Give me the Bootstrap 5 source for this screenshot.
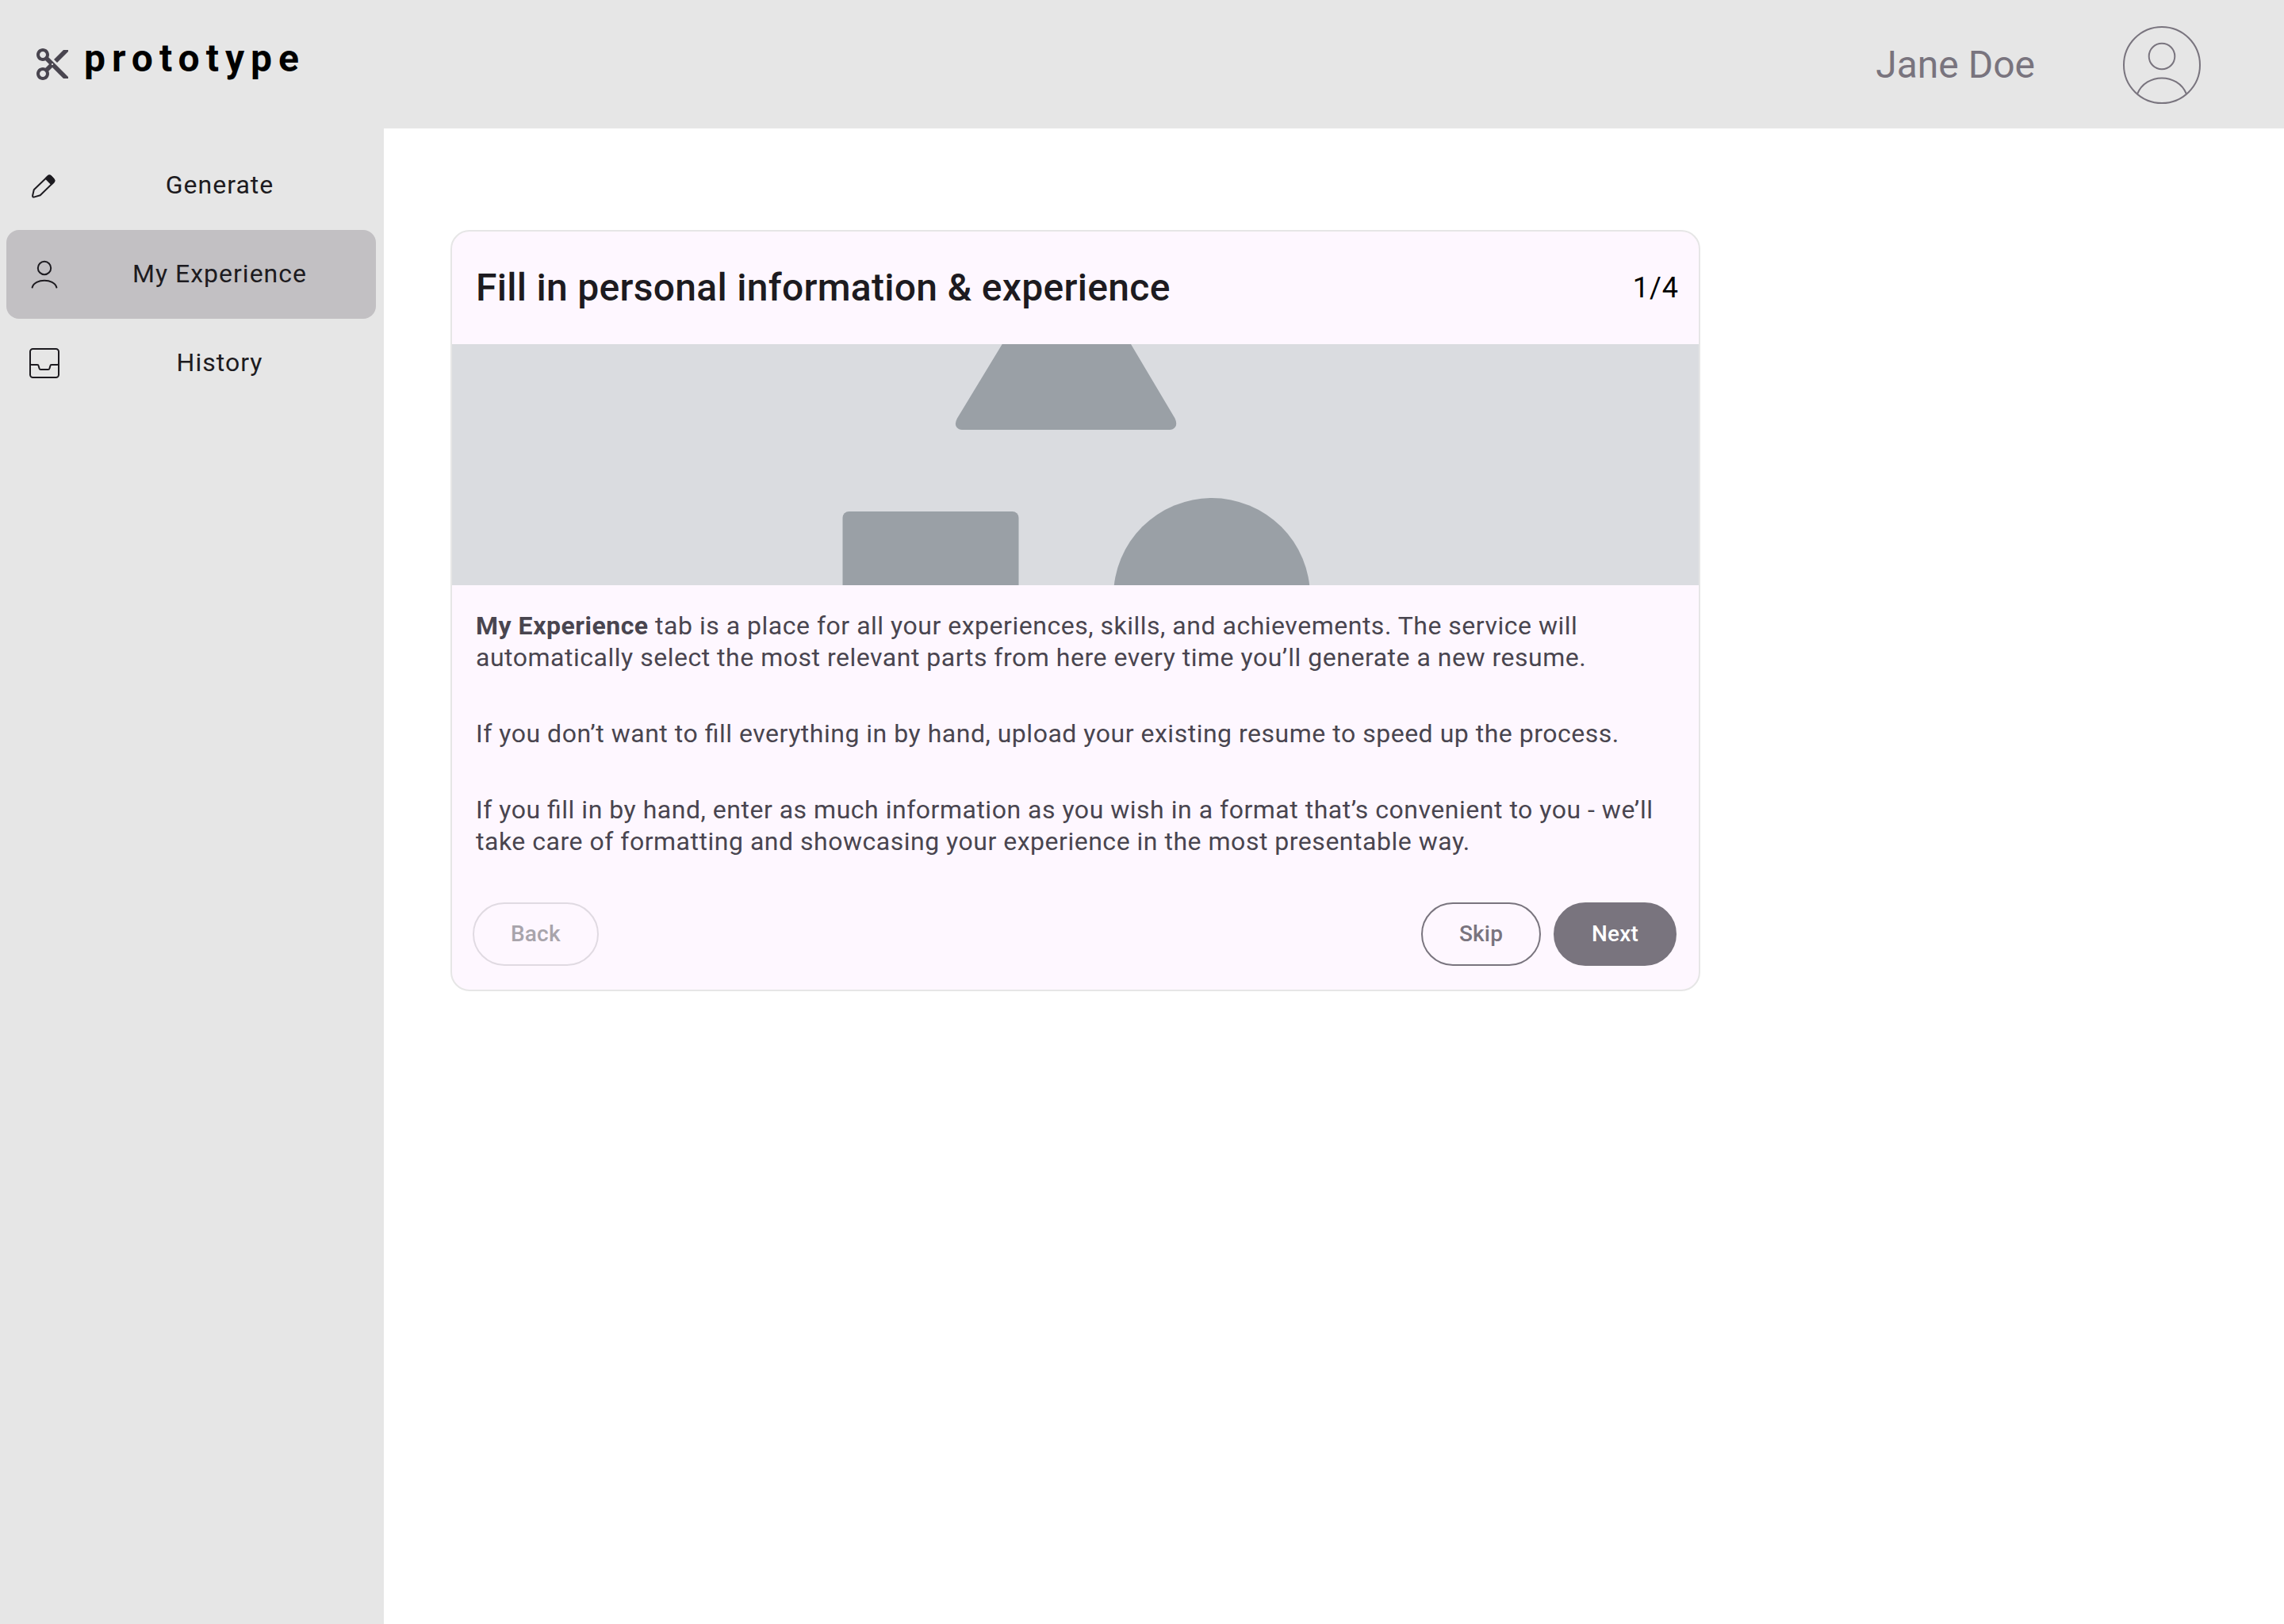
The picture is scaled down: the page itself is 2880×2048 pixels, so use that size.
<!DOCTYPE html>
<html lang="en">
<head>
<meta charset="utf-8">
<meta name="viewport" content="width=device-width, initial-scale=1">
<title>prototype – My Experience</title>
<link href="https://cdn.jsdelivr.net/npm/bootstrap@5.3.0/dist/css/bootstrap.min.css" rel="stylesheet">
<style>
  :root { --chrome: #e6e6e6; --ink: #1d1b20; --ink-soft: #49454f; --accent: #79747e; --surface: #fef7ff; }
  body { font-family: Roboto, "Liberation Sans", sans-serif; font-size: 32px; line-height: 40px; color: var(--ink); background: #fff; font-feature-settings: "liga" 1; }
  .topbar { background: var(--chrome); height: 162px; padding: 0 104px 0 42px; }
  .brand { gap: 16px; color: #000; font-size: 48px; font-weight: 700; line-height: 56px; letter-spacing: 8px; padding-bottom: 14px; }
  .brand svg { margin-top: 14px; color: var(--ink-soft); }
  .account { gap: 110px; color: var(--accent); font-size: 48px; line-height: 56px; padding-top: 2px; }
  .side { background: var(--chrome); width: 484px; padding: 16px 10px 0 8px; }
  .side .nav-link { height: 112px; padding: 0 0 0 28px; border-radius: 16px; color: var(--ink); letter-spacing: 1px; }
  .side .nav-link.active { background: #c2c0c3; color: var(--ink); }
  .side .side-label { padding: 0 0 2px 4px; }
  .stage { padding: 128px 84px; }
  .tour { --bs-card-bg: var(--surface); --bs-card-border-color: #e6e6e6; --bs-card-border-width: 2px; --bs-card-border-radius: 24px; --bs-card-inner-border-radius: 22px; width: 100%; max-width: 1576px; }
  .tour-head { height: 142px; padding: 0 25px 0 30px; }
  .tour-head h1 { font-size: 48px; line-height: 56px; font-weight: 500; letter-spacing: .006em; }
  .tour-step { color: #000; font-size: 36px; letter-spacing: 1px; }
  .tour-art { height: 304px; background: #dadce0; }
  .tour-text { color: var(--ink-soft); padding: 31px 30px 1px; letter-spacing: .016em; }
  .tour-text p { margin-bottom: 56px; }
  .tour-foot { padding: 0 28px 30px 26px; gap: 16px; }
  .pill { --bs-btn-font-size: 28px; --bs-btn-font-weight: 500; --bs-btn-line-height: 40px; --bs-btn-padding-y: 18px; --bs-btn-padding-x: 46px; --bs-btn-border-width: 2px; --bs-btn-border-radius: 40px; letter-spacing: .006em; }
  .pill-line { --bs-btn-color: var(--accent); --bs-btn-border-color: var(--accent); --bs-btn-disabled-color: #a8a4ab; --bs-btn-disabled-border-color: #e0dae2; --bs-btn-disabled-opacity: 1; }
  .pill-solid { --bs-btn-color: #fff; --bs-btn-bg: var(--accent); --bs-btn-border-color: var(--accent); }
</style>
</head>
<body class="min-vh-100 d-flex flex-column">
<header class="topbar d-flex align-items-center justify-content-between">
  <a href="#" class="brand d-flex align-items-center text-decoration-none">
    <svg width="48" height="48" viewBox="0 0 24 24" fill="currentColor" aria-hidden="true"><path d="M9.64 7.64c.23-.5.36-1.05.36-1.64 0-2.21-1.79-4-4-4S2 3.79 2 6s1.79 4 4 4c.59 0 1.14-.13 1.64-.36L10 12l-2.36 2.36C7.14 14.13 6.59 14 6 14c-2.21 0-4 1.79-4 4s1.79 4 4 4 4-1.79 4-4c0-.59-.13-1.14-.36-1.64L12 14l7 7h3v-1L9.64 7.64zM6 8c-1.1 0-2-.89-2-2s.9-2 2-2 2 .89 2 2-.9 2-2 2zm0 12c-1.1 0-2-.89-2-2s.9-2 2-2 2 .89 2 2-.9 2-2 2zm6-7.5c-.28 0-.5-.22-.5-.5s.22-.5.5-.5.5.22.5.5-.22.5-.5.5zM19 3l-6 6 2 2 7-7V3z"/></svg>
    <span>prototype</span>
  </a>
  <div class="account d-flex align-items-center">
    <span>Jane Doe</span>
    <svg width="100" height="100" viewBox="0 0 100 100" fill="none" stroke="currentColor" stroke-width="2" role="img" aria-label="Account"><circle cx="50" cy="50" r="48"/><circle cx="50" cy="39" r="16.3"/><path d="M19 86.5C30 59.7 70 59.7 81 86.5"/></svg>
  </div>
</header>
<div class="d-flex flex-grow-1">
  <nav class="side nav flex-column flex-shrink-0" aria-label="Main">
    <a href="#" class="nav-link d-flex align-items-center">
      <svg width="40" height="40" viewBox="0 0 40 40" fill="none" stroke="currentColor" stroke-width="2" stroke-linejoin="round" aria-hidden="true"><path d="M6.8 25.2 24 8.8c1.5-1.5 3-1.5 4.5 0l2.8 2.8c1.5 1.5 1.5 3 0 4.5L14.7 32.2 7.5 34.4c-1.7.5-2.5 0-2.4-1.6z"/><path fill="currentColor" d="M21.8 11 24 8.8c1.5-1.5 3-1.5 4.5 0l2.8 2.8c1.5 1.5 1.5 3 0 4.5L28.9 18.4z"/></svg>
      <span class="side-label flex-grow-1 text-center">Generate</span>
    </a>
    <a href="#" class="nav-link active d-flex align-items-center" aria-current="page">
      <svg width="40" height="40" viewBox="0 0 40 40" fill="none" stroke="currentColor" stroke-width="2" stroke-linecap="round" aria-hidden="true"><circle cx="20" cy="12" r="8.2"/><path d="M4.6 36.6C8 24.8 32 24.8 35.4 36.6"/></svg>
      <span class="side-label flex-grow-1 text-center">My Experience</span>
    </a>
    <a href="#" class="nav-link d-flex align-items-center">
      <svg width="40" height="40" viewBox="0 0 40 40" fill="none" stroke="currentColor" stroke-width="2" stroke-linejoin="round" aria-hidden="true"><rect x="2" y="2" width="36" height="36" rx="3.5"/><path d="M2 20.5C2 21.5 3 22 4 22h7c1 0 1.500.5 1.700 1.500l.8 3c.3 1 .8 1.500 1.800 1.500h9.400c1 0 1.500-.5 1.800-1.500l.8-3c.2-1 .7-1.500 1.700-1.500h7c1 0 2-.5 2-1.500"/></svg>
      <span class="side-label flex-grow-1 text-center">History</span>
    </a>
  </nav>
  <main class="stage flex-grow-1">
    <section class="card tour overflow-hidden">
      <div class="tour-head d-flex align-items-center justify-content-between">
        <h1 class="m-0">Fill in personal information &amp; experience</h1>
        <span class="tour-step">1/4</span>
      </div>
      <svg class="tour-art w-100 d-block" viewBox="0 0 1572 304" preserveAspectRatio="xMidYMid slice" fill="#9aa0a6" aria-hidden="true">
        <path d="M693.7 0H856L911.5 93.5Q915 101 911.5 105 909 108 905 108H643Q639 108 636.5 105 633 101 637 93.5Z"/>
        <rect x="492.5" y="211" width="222" height="120" rx="8"/>
        <circle cx="958" cy="318" r="124"/>
      </svg>
      <div class="tour-text">
        <p><b>My Experience</b> tab is a place for all your experiences, skills, and achievements. The service will automatically select the most relevant parts from here every time you’ll generate a new resume.</p>
        <p>If you don’t want to fill everything in by hand, upload your existing resume to speed up the process.</p>
        <p>If you fill in by hand, enter as much information as you wish in a format that’s convenient to you - we’ll take care of formatting and showcasing your experience in the most presentable way.</p>
      </div>
      <div class="tour-foot d-flex">
        <button type="button" class="btn pill pill-line me-auto" disabled>Back</button>
        <button type="button" class="btn pill pill-line">Skip</button>
        <button type="button" class="btn pill pill-solid">Next</button>
      </div>
    </section>
  </main>
</div>
<script src="https://cdn.jsdelivr.net/npm/bootstrap@5.3.0/dist/js/bootstrap.bundle.min.js"></script>
</body>
</html>
